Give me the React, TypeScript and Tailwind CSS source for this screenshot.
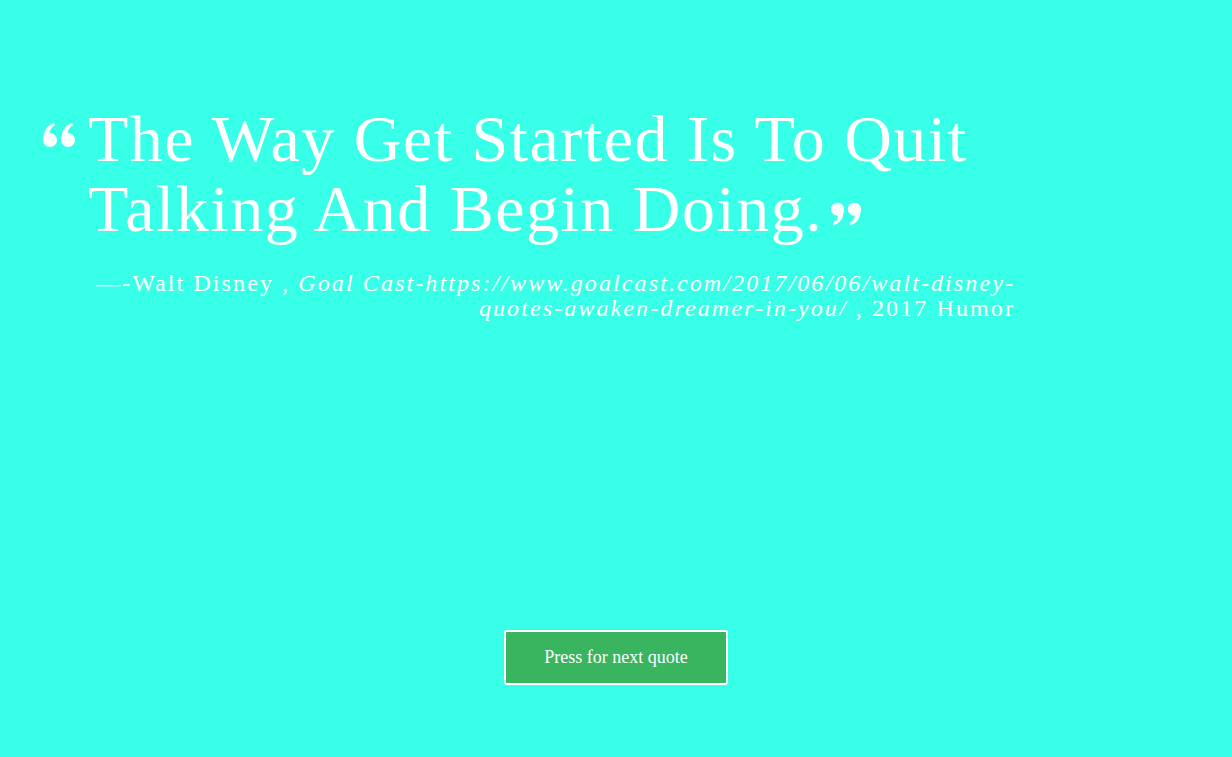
function QuoteMark({ className }: { className?: string }) {
  return (
    <svg width="34" height="32" viewBox="0 0 34 32" className={className} fill="white">
      <circle cx="8" cy="19" r="7" />
      <path d="M1.5 18 C1.5 10 5 4.5 12 2 L13 4.2 C9 6.5 7.5 9.5 7.5 13 Z" />
      <circle cx="26" cy="19" r="7" />
      <path d="M19.5 18 C19.5 10 23 4.5 30 2 L31 4.2 C27 6.5 25.5 9.5 25.5 13 Z" />
    </svg>
  )
}

export default function App() {
  return (
    <div className="w-full bg-[#38ffe7] flex flex-col" style={{ minHeight: 757 }}>
      <div className="pl-[42px] pt-[104px] w-[1015px]">
        <div className="flex items-start">
          <QuoteMark className="mt-[17px] mr-[12px] shrink-0" />
          <h1 className="text-white font-['Liberation_Serif',serif] text-[66px] leading-[70px] font-normal tracking-[1.5px]">
            The Way Get Started Is To Quit Talking And Begin Doing.
            <QuoteMark className="inline-block ml-[7px] rotate-180 align-[4px] w-[32px] h-[30px]" />
          </h1>
        </div>
        <p className="mt-[27px] text-right text-white font-['Liberation_Serif',serif] text-[24px] leading-[25px] tracking-[2.1px]">
          —-Walt Disney , <em>Goal Cast-https://www.goalcast.com/2017/06/06/walt-disney-<br />quotes-awaken-dreamer-in-you/</em> , 2017 Humor
        </p>
      </div>
      <div className="flex justify-center mt-[309px]">
        <button className="w-[224px] h-[55px] bg-[#39b55f] border-2 border-white rounded-[3px] text-white font-['Liberation_Serif',serif] text-[18px]">
          Press for next quote
        </button>
      </div>
    </div>
  )
}
